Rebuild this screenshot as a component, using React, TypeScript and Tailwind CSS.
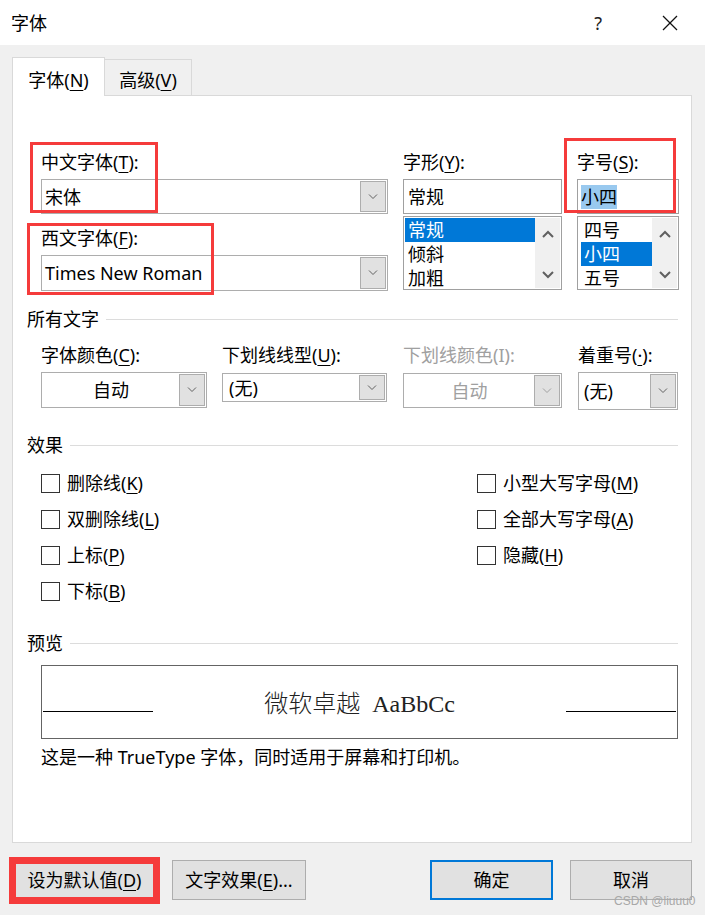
import React from "react";

const U = ({ c }: { c: string }) => (
  <span className="underline decoration-1 underline-offset-[3px]">{c}</span>
);

const SmallChevron = ({ color = "#606060" }: { color?: string }) => (
  <svg width="10" height="6" viewBox="0 0 10 6">
    <polyline points="1,0.5 5,4.5 9,0.5" fill="none" stroke={color} strokeWidth="1" />
  </svg>
);

const ScrollUp = () => (
  <svg width="12" height="8" viewBox="0 0 12 8">
    <polyline points="1,7 6,2 11,7" fill="none" stroke="#606060" strokeWidth="2" />
  </svg>
);
const ScrollDown = () => (
  <svg width="12" height="8" viewBox="0 0 12 8">
    <polyline points="1,1 6,6 11,1" fill="none" stroke="#606060" strokeWidth="2" />
  </svg>
);

function Combo({
  text,
  h,
  w,
  center,
  disabled,
  pl = "pl-[2px]",
}: {
  text: string;
  h: string;
  w?: string;
  center?: boolean;
  disabled?: boolean;
  pl?: string;
}) {
  return (
    <div className={`flex ${h} ${w ?? "w-full"} border border-[#adadad] bg-white p-px`}>
      <div
        className={`flex flex-1 items-center ${center ? "justify-center" : pl} ${
          disabled ? "text-[#a0a0a0]" : "text-black"
        } whitespace-nowrap`}
      >
        {text}
      </div>
      <div className="flex w-[26px] items-center justify-center border border-[#adadad] bg-[#e1e1e1]">
        <SmallChevron color={disabled ? "#a0a0a0" : "#606060"} />
      </div>
    </div>
  );
}

function ListBox({ items, sel, hlPad }: { items: string[]; sel: number; hlPad: string }) {
  return (
    <div className="flex h-[74px] border border-[#a0a0a0] bg-white p-px">
      <div className={`flex flex-1 flex-col ${hlPad}`}>
        {items.map((it, i) => (
          <div
            key={it}
            className={`h-[24px] pl-[3px] leading-[24px] ${
              i === sel ? "bg-[#0078d7] text-white" : "text-black"
            }`}
          >
            {it}
          </div>
        ))}
      </div>
      <div className="flex w-[25px] flex-col items-center justify-between bg-[#f0f0f0] pb-[9px] pt-[12px]">
        <ScrollUp />
        <ScrollDown />
      </div>
    </div>
  );
}

function Heading({ text }: { text: string }) {
  return (
    <div className="flex h-[24px] items-center gap-[7px] pl-[14px] pr-[13px]">
      <span className="leading-[24px]">{text}</span>
      <div className="h-px flex-1 bg-[#dcdcdc]" />
    </div>
  );
}

function Check({ children }: { children: React.ReactNode }) {
  return (
    <div className="flex h-[36px] items-center gap-[7px]">
      <div className="h-[19px] w-[19px] border border-[#333333] bg-white" />
      <span className="leading-[24px]">{children}</span>
    </div>
  );
}

export default function App() {
  return (
    <div className="relative h-[915px] w-[705px] overflow-hidden bg-[#f0f0f0] font-['Noto_Sans','Noto_Sans_CJK_SC',sans-serif] text-[18px] leading-[24px] text-black">
      {/* Title bar */}
      <div className="flex h-[45px] items-center bg-white pl-[11px]">
        <span className="text-[18px]">字体</span>
        <span className="ml-auto mr-[60px] text-[18px] text-[#222]">?</span>
        <svg width="16" height="16" viewBox="0 0 16 16" className="mr-[27px]">
          <line x1="1" y1="1" x2="15" y2="15" stroke="#111" strokeWidth="1.2" />
          <line x1="15" y1="1" x2="1" y2="15" stroke="#111" strokeWidth="1.2" />
        </svg>
      </div>

      <div className="px-[12px] pr-[13px]">
        {/* Tabs */}
        <div className="mt-[12px] flex h-[38px] items-end">
          <div className="relative z-10 -mb-px flex h-[39px] w-[93px] justify-center border border-b-0 border-[#d9d9d9] bg-white pt-[10px]">
            <span>
              字体(<U c="N" />)
            </span>
          </div>
          <div className="flex h-[36px] w-[87px] justify-center border-r border-t border-[#d9d9d9] pt-[8px]">
            <span>
              高级(<U c="V" />)
            </span>
          </div>
        </div>

        {/* Panel */}
        <div className="flex h-[748px] flex-col border border-[#d9d9d9] bg-white">
          {/* Row A */}
          <div className="mt-[54px] flex pl-[28px]">
            <div className="flex w-[347px] flex-col">
              <div className="h-[24px]">
                中文字体(<U c="T" />):
              </div>
              <div className="mt-[5px]">
                <Combo text="宋体" h="h-[35px]" />
              </div>
              <div className="mt-[12px] h-[24px]">
                西文字体(<U c="F" />):
              </div>
              <div className="mt-[5px]">
                <Combo text="Times New Roman" h="h-[36px]" />
              </div>
            </div>
            <div className="ml-[15px] flex w-[159px] flex-col">
              <div className="h-[24px]">
                字形(<U c="Y" />):
              </div>
              <div className="mt-[5px] flex h-[35px] items-center border border-[#a0a0a0] bg-white pl-[4px]">
                常规
              </div>
              <div className="mt-[2px]">
                <ListBox items={["常规", "倾斜", "加粗"]} sel={0} hlPad="pl-0" />
              </div>
            </div>
            <div className="ml-[15px] flex w-[102px] flex-col">
              <div className="h-[24px]">
                字号(<U c="S" />):
              </div>
              <div className="mt-[5px] flex h-[35px] items-center border border-[#a0a0a0] bg-white pl-[3px]">
                <span className="bg-[#99c9ef] leading-[24px]">小四</span>
              </div>
              <div className="mt-[2px]">
                <ListBox items={["四号", "小四", "五号"]} sel={1} hlPad="pl-[2px]" />
              </div>
            </div>
          </div>

          {/* 所有文字 */}
          <div className="mt-[16px]">
            <Heading text="所有文字" />
          </div>
          <div className="mt-[12px] flex pl-[28px]">
            <div className="w-[181px]">
              <div className="h-[24px]">
                字体颜色(<U c="C" />):
              </div>
              <div className="mt-[5px]">
                <Combo text="自动" h="h-[36px]" w="w-[166px]" center />
              </div>
            </div>
            <div className="w-[181px]">
              <div className="h-[24px] whitespace-nowrap">
                下划线线型(<U c="U" />):
              </div>
              <div className="mt-[6px]">
                <Combo text="(无)" h="h-[29px]" w="w-[165px]" pl="pl-[5px]" />
              </div>
            </div>
            <div className="w-[175px]">
              <div className="h-[24px] whitespace-nowrap text-[#a0a0a0]">下划线颜色(I):</div>
              <div className="mt-[6px]">
                <Combo text="自动" h="h-[35px]" w="w-[159px]" center disabled />
              </div>
            </div>
            <div className="w-[100px]">
              <div className="h-[24px] whitespace-nowrap">
                着重号(<U c="·" />):
              </div>
              <div className="mt-[5px]">
                <Combo text="(无)" h="h-[38px]" w="w-[100px]" pl="pl-[4px]" />
              </div>
            </div>
          </div>

          {/* 效果 */}
          <div className="mt-[23px]">
            <Heading text="效果" />
          </div>
          <div className="mt-[8px] flex pl-[28px]">
            <div className="flex w-[436px] flex-col">
              <Check>
                删除线(<U c="K" />)
              </Check>
              <Check>
                双删除线(<U c="L" />)
              </Check>
              <Check>
                上标(<U c="P" />)
              </Check>
              <Check>
                下标(<U c="B" />)
              </Check>
            </div>
            <div className="flex flex-col">
              <Check>
                小型大写字母(<U c="M" />)
              </Check>
              <Check>
                全部大写字母(<U c="A" />)
              </Check>
              <Check>
                隐藏(<U c="H" />)
              </Check>
            </div>
          </div>

          {/* 预览 */}
          <div className="mt-[22px]">
            <Heading text="预览" />
          </div>
          <div className="ml-[28px] mt-[10px] flex h-[74px] w-[637px] items-end border border-[#646464] bg-white pb-[26px]">
            <div className="ml-px h-px w-[110px] bg-black" />
            <div className="flex flex-1 justify-center font-['Liberation_Serif','Noto_Sans_CJK_SC',serif] text-[24px] leading-[24px] text-[#222] [transform:translateY(4px)]">
              <span className="font-light">微软卓越</span>
              <span className="ml-[12px]">AaBbCc</span>
            </div>
            <div className="mr-px h-px w-[110px] bg-black" />
          </div>
          <div className="ml-[28px] mt-[6px] h-[24px]">
            这是一种 TrueType 字体，同时适用于屏幕和打印机。
          </div>
        </div>

        {/* Buttons */}
        <div className="mt-[17px] flex h-[40px]">
          <div className="flex w-[145px] items-center justify-center border border-[#adadad] bg-[#e1e1e1]">
            <span>
              设为默认值(<U c="D" />)
            </span>
          </div>
          <div className="ml-[15px] flex w-[134px] items-center justify-center border border-[#adadad] bg-[#e1e1e1]">
            <span>
              文字效果(<U c="E" />)...
            </span>
          </div>
          <div className="ml-auto flex w-[123px] items-center justify-center border-2 border-[#0078d7] bg-[#e1e1e1]">
            确定
          </div>
          <div className="ml-[17px] flex w-[122px] items-center justify-center border border-[#adadad] bg-[#e1e1e1]">
            取消
          </div>
        </div>
      </div>

      {/* Red highlight overlays */}
      <div className="pointer-events-none absolute left-[30px] top-[142px] h-[71px] w-[128px] border-[3px] border-[#f53b3b]" />
      <div className="pointer-events-none absolute left-[27px] top-[223px] h-[72px] w-[187px] border-[3px] border-[#f53b3b]" />
      <div className="pointer-events-none absolute left-[564px] top-[138px] h-[75px] w-[112px] border-[3px] border-[#f53b3b]" />
      <div className="pointer-events-none absolute left-[9px] top-[857px] h-[47px] w-[151px] border-[7px] border-[#f53b3b]" />

      {/* Watermark */}
      <div className="pointer-events-none absolute left-[614px] top-[894px] font-['Liberation_Sans',sans-serif] text-[12px] leading-[14px] text-[#a8a8a8]">
        CSDN @liuuu0
      </div>
    </div>
  );
}
